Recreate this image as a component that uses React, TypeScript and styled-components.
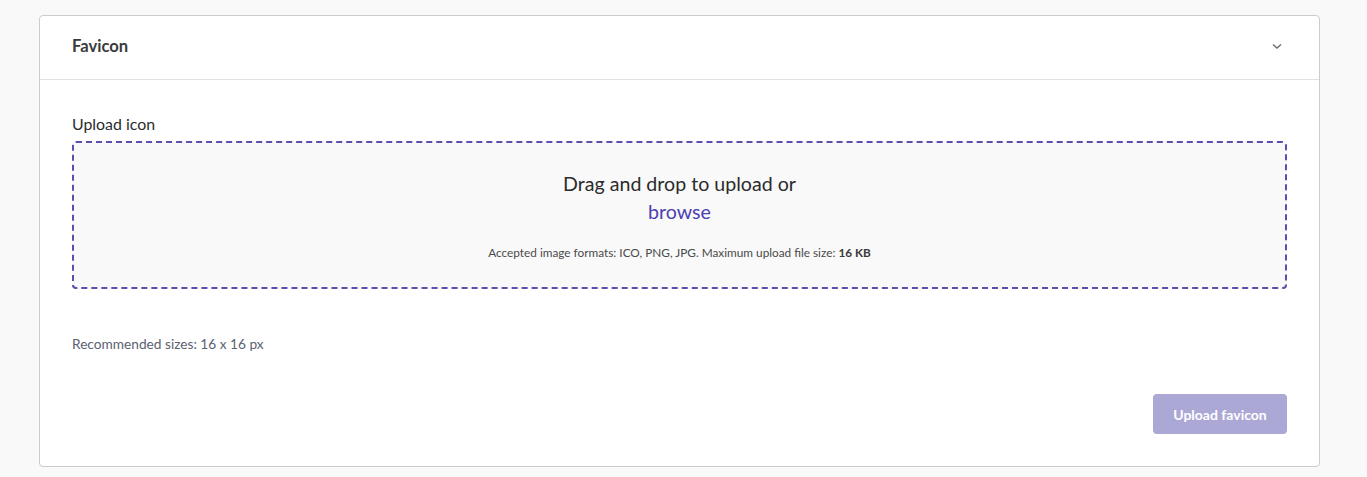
import React from "react";
import styled, { createGlobalStyle } from "styled-components";

const Global = createGlobalStyle`
  html, body { margin: 0; padding: 0; background: #f9f9f9; }
  body { font-family: Lato, "Open Sans", "Liberation Sans", sans-serif; color: #2b2b2b; }
`;

const Page = styled.div`
  padding: 15px 47px 10px 39px;
`;

const Card = styled.section`
  background: #ffffff;
  border: 1px solid #cccccc;
  border-radius: 4px;
`;

const Header = styled.div`
  display: flex;
  align-items: center;
  justify-content: space-between;
  height: 60px;
  padding: 0 37px 3px 32px;
  border-bottom: 1px solid #e2e2e2;
`;

const Title = styled.h2`
  margin: 0;
  font-size: 16.6px;
  font-weight: 700;
  color: #3a3a3a;
`;

const Body = styled.div`
  display: flex;
  flex-direction: column;
  padding: 35px 32px 32px 32px;
`;

const Label = styled.label`
  font-size: 15.9px;
  line-height: 18px;
  color: #2b2b2b;
  margin-bottom: 8px;
`;

const Dropzone = styled.div`
  display: flex;
  flex-direction: column;
  align-items: center;
  box-sizing: border-box;
  height: 148px;
  padding-top: 28px;
  background: #f9f9f9;
  border: 2px dashed #5a4fae;
  border-radius: 4px;
`;

const DropText = styled.div`
  font-size: 19.6px;
  line-height: 26px;
  color: #2b2b2b;
`;

const Browse = styled.span`
  font-size: 19.6px;
  line-height: 30px;
  color: #4d3fb0;
  cursor: pointer;
`;

const Hint = styled.div`
  margin-top: 19px;
  font-size: 11.8px;
  line-height: 14px;
  color: #4a4a4a;
  b { font-weight: 700; color: #3a3a3a; }
`;

const Sizes = styled.div`
  margin-top: 47px;
  font-size: 13.7px;
  line-height: 16px;
  color: #5a6170;
`;

const Footer = styled.div`
  display: flex;
  justify-content: flex-end;
  margin-top: 42px;
`;

const Button = styled.button`
  width: 134px;
  height: 40px;
  border: none;
  border-radius: 4px;
  background: #aca8d6;
  color: #ffffff;
  font-family: inherit;
  font-size: 14px;
  font-weight: 700;
  cursor: not-allowed;
`;

const Chevron = () => (
  <svg width="10" height="7" viewBox="0 0 10 7" fill="none">
    <path d="M1 1.5 L5 5 L9 1.5" stroke="#6b6b6b" strokeWidth="1.4" />
  </svg>
);

export default function App() {
  return (
    <>
      <Global />
      <Page>
        <Card>
          <Header>
            <Title>Favicon</Title>
            <Chevron />
          </Header>
          <Body>
            <Label>Upload icon</Label>
            <Dropzone>
              <DropText>Drag and drop to upload or</DropText>
              <Browse>browse</Browse>
              <Hint>
                Accepted image formats: ICO, PNG, JPG. Maximum upload file size: <b>16 KB</b>
              </Hint>
            </Dropzone>
            <Sizes>Recommended sizes: 16 x 16 px</Sizes>
            <Footer>
              <Button>Upload favicon</Button>
            </Footer>
          </Body>
        </Card>
      </Page>
    </>
  );
}
